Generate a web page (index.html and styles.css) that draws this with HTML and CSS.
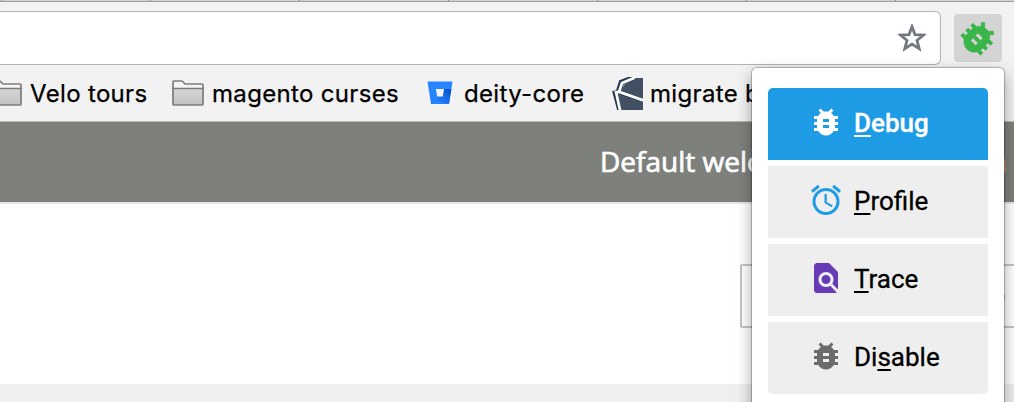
FILE: index.html
```html
<!DOCTYPE html>
<html lang="en">
<head>
<meta charset="utf-8">
<title>Debug helper</title>
<link rel="stylesheet" href="styles.css">
</head>
<body>
<div class="browser">
  <div class="tabstrip"><i></i><i></i><i></i><i></i><i></i><i></i><i></i></div>
  <div class="toolbar">
    <div class="omnibox">
      <svg class="star" viewBox="0 0 28 28"><path d="M14 2.8l3 7.800 8.500.4-6.500 5.400 2.200 8.300-7.200-4.600-7.200 4.600L9 16.400 2.500 11l8.500-.4z"/></svg>
    </div>
    <div class="extension">
      <svg class="ext-bug" viewBox="0 0 24 24"><use href="#bug"/></svg>
    </div>
  </div>
  <div class="bookmarks">
    <div class="bookmark velo">
      <svg class="folder" viewBox="0 0 32 26"><use href="#folder"/></svg><span>Velo tours</span>
    </div>
    <div class="bookmark magento">
      <svg class="folder" viewBox="0 0 32 26">
        <defs>
          <linearGradient id="fold" x1="0" y1="0" x2="0" y2="1"><stop offset="0" stop-color="#d6d6d6"/><stop offset="1" stop-color="#c2c2c2"/></linearGradient>
          <g id="folder" stroke="#7d7d7d" stroke-width="1.700" stroke-linejoin="round"><path fill="#f5f5f5" d="M1 9V2q0-1 1-1h8l3 3h17q1 0 1 1v4z"/><path fill="url(#fold)" d="M1 8.500h30V24q0 1-1 1H2q-1 0-1-1z"/></g>
        </defs>
        <use href="#folder"/>
      </svg><span>magento curses</span>
    </div>
    <div class="bookmark deity">
      <svg class="bucket" viewBox="0 0 26 24">
        <defs><linearGradient id="bb" x1="1" y1="0" x2="0" y2="1"><stop offset=".15" stop-color="#0a56cf"/><stop offset=".8" stop-color="#2684ff"/></linearGradient></defs>
        <path fill="#2684ff" d="M.5.500h25L22 23H4z"/><path fill="url(#bb)" d="M24.400 8H16.500l-1.200 7.500H11L5 22.500l.5.500H22z"/><path fill="#f2f2f2" d="M8.800 8h8.200l-1.200 7.500h-5.600z"/>
      </svg><span>deity-core</span>
    </div>
    <div class="bookmark migrate">
      <svg class="sheets" viewBox="0 0 31 33">
        <path d="M20 1.500L9.500 5.500 6.500 15 31 23M6.500 15L3.500 16l4.500 17" fill="none" stroke="#263750" stroke-width="5.600"/>
        <path d="M12.500 7.500L24 1h7v21L8.500 14.500z" fill="#435063"/>
        <path d="M5 17.500l26 7v8.500H9.500z" fill="#435063"/>
        <path d="M22 1L10 6 7 14.800 31 23.200M9 15.200L4 15l4 18" fill="none" stroke="#fff" stroke-width="2.700"/>
      </svg><span>migrate basic</span>
    </div>
  </div>
  <div class="page">
    <div class="welcome"><span>Default welcome msg!</span><span class="signin">Sign In</span></div>
    <div class="content"><div class="search"><i></i></div></div>
    <div class="bottom"></div>
  </div>
  <div class="popup">
    <div class="item active">
      <svg viewBox="0 0 24 24"><path id="bug" d="M20 8h-2.810c-.45-.78-1.070-1.450-1.820-1.960L17 4.410 15.590 3l-2.170 2.170C12.960 5.060 12.490 5 12 5s-.96.06-1.410.17L8.410 3 7 4.410l1.620 1.630C7.880 6.550 7.260 7.220 6.810 8H4v2h2.090c-.05.33-.09.66-.09 1v1H4v2h2v1c0 .34.04.67.09 1H4v2h2.810c1.040 1.790 2.970 3 5.190 3s4.150-1.210 5.190-3H20v-2h-2.090c.05-.33.09-.66.09-1v-1h2v-2h-2v-1c0-.34-.04-.67-.09-1H20V8zm-6 8h-4v-2h4v2zm0-4h-4v-2h4v2z"/></svg>
      <span><u>D</u>ebug</span>
    </div>
    <div class="item profile">
      <svg viewBox="0 0 24 24"><path d="M22 5.720l-4.600-3.860-1.290 1.530 4.600 3.860L22 5.720zM7.880 3.390L6.600 1.860 2 5.710l1.290 1.530 4.590-3.850zM12.500 8H11v6l4.750 2.850.75-1.230-4-2.370V8zM12 4c-4.970 0-9 4.030-9 9s4.020 9 9 9a9 9 0 0 0 0-18zm0 16c-3.870 0-7-3.130-7-7s3.130-7 7-7 7 3.130 7 7-3.130 7-7 7z"/></svg>
      <span><u>P</u>rofile</span>
    </div>
    <div class="item trace">
      <svg viewBox="0 0 24 24"><path d="M20 19.590V8l-6-6H6c-1.100 0-1.990.9-1.990 2L4 20c0 1.100.89 2 1.990 2H18c.45 0 .85-.15 1.190-.4l-4.430-4.430c-.8.52-1.740.83-2.760.83-2.760 0-5-2.240-5-5s2.240-5 5-5 5 2.240 5 5c0 1.020-.31 1.960-.83 2.750L20 19.590zM9 13c0 1.660 1.340 3 3 3s3-1.340 3-3-1.340-3-3-3-3 1.340-3 3z"/></svg>
      <span><u>T</u>race</span>
    </div>
    <div class="item disable">
      <svg viewBox="0 0 24 24"><use href="#bug"/></svg>
      <span>Di<u>s</u>able</span>
    </div>
  </div>
</div>
</body>
</html>
```
FILE: styles.css
```css
* { box-sizing: border-box; }
body { margin: 0; background: #fff; }
svg { display: block; flex: none; }
.browser { position: relative; width: 1014px; height: 402px; overflow: hidden; background: #f2f2f2; }
.tabstrip { height: 2px; background: #d2d2d2; border-bottom: 1px solid #a0a0a0; display: flex; gap: 148px; padding-left: 1px; }
.tabstrip i { width: 1px; height: 1px; background: #8c8c8c; flex: none; }
.toolbar { height: 64px; padding: 9px 12px 1px 0; display: flex; }
.omnibox { width: 941px; height: 54px; background: #fff; border: 1px solid #b4b4b4; border-left: 0; border-radius: 0 6px 6px 0; display: flex; justify-content: flex-end; padding: 12px 14px 0 0; }
.star { width: 28px; height: 28px; fill: none; stroke: #73777d; stroke-width: 2.800; }
.extension { width: 48px; height: 48px; margin: 3px 0 0 13px; border-radius: 4px; background: #d4d4d4; display: flex; align-items: center; justify-content: center; }
.ext-bug { width: 42px; height: 42px; fill: #3ab54a; stroke: #3ab54a; stroke-width: .3; transform: rotate(45deg); }
.bookmarks { height: 56px; border-bottom: 1px solid #b8b8b8; display: flex; font: 24px/30px Inter, sans-serif; letter-spacing: .33px; color: #000; -webkit-text-stroke: .25px #000; }
.bookmark { display: flex; flex: none; align-items: flex-start; white-space: nowrap; }
.bookmark span { margin-top: 13px; }
.folder { width: 32px; height: 26px; margin-top: 14px; }
.velo { width: 182px; margin-left: -10px; gap: 8px; }
.magento { width: 255px; gap: 8px; }
.deity { width: 185px; gap: 11px; }
.bucket { width: 26px; height: 24px; margin-top: 15px; }
.migrate { gap: 7px; }
.sheets { width: 31px; height: 33px; margin-top: 11px; }
.page { background: #fff; height: 280px; }
.welcome { height: 82px; background: #7e807c; border-bottom: 2px solid #e6e6e6; padding: 19px 7px 0 600px; color: #fff; font: 28px/40px "Open Sans", sans-serif; -webkit-text-stroke: .7px #fff; white-space: nowrap; display: flex; justify-content: space-between; }
.signin { color: #e8a35c; -webkit-text-stroke-color: #e8a35c; }
.content { height: 180px; padding: 60px 0 0 740px; }
.search { height: 64px; width: 300px; border: 2px solid #c4c4c4; border-radius: 2px; display: flex; padding: 29px 0 0 257px; }
.search i { width: 6px; height: 5px; background: #b4c8d6; }
.bottom { height: 18px; background: #efefef; }
.popup { position: absolute; left: 752px; top: 68px; width: 252px; height: 350px; padding: 20px 16px; background: #fff; border-radius: 5px; box-shadow: 0 0 1px 1px rgba(0,0,0,.25), 0 6px 16px rgba(0,0,0,.36); display: flex; flex-direction: column; gap: 6px; }
.item { height: 72px; flex: none; background: #eee; padding: 16px 0 0 40px; display: flex; gap: 10px; font: 26px/36px Roboto, sans-serif; color: #000; -webkit-text-stroke: .3px #000; }
.item svg { width: 36px; height: 36px; fill: #6b6b6b; }
.item span { padding-top: 1px; }
.item u { text-decoration-thickness: 2px; text-underline-offset: 3px; text-decoration-skip-ink: none; }
.item.active { background: #1d9be4; color: #fff; -webkit-text-stroke-color: #fff; font-weight: 500; border-radius: 5px 5px 0 0; }
.active svg { fill: #fff; }
.profile svg { fill: #1d9be4; }
.trace svg { fill: #673ab7; }
.item.disable { border-radius: 0 0 5px 5px; }
```
